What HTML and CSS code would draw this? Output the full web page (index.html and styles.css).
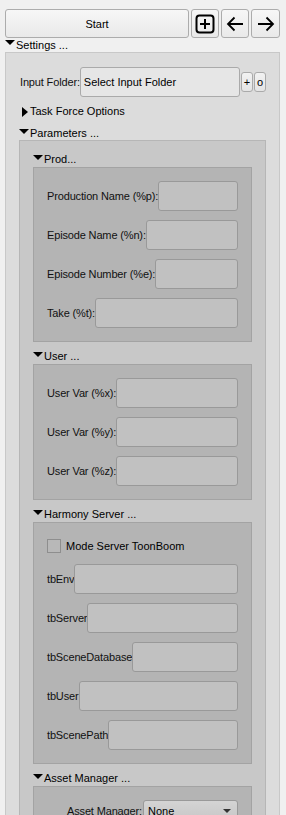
FILE: index.html
```html
<!DOCTYPE html>
<html>
<head>
<meta charset="utf-8">
<link rel="stylesheet" href="styles.css">
</head>
<body>
<div class="toolbar">
  <button class="btn btn-start">Start</button>
  <button class="btn btn-icon"><svg width="20" height="20" viewBox="0 0 20 20"><rect x="1.5" y="1.5" width="17" height="17" rx="3" fill="none" stroke="#000" stroke-width="2"/><path d="M10 5v10M5 10h10" stroke="#000" stroke-width="2"/></svg></button>
  <button class="btn btn-icon"><svg width="18" height="16" viewBox="0 0 18 16"><path d="M17 8H2M8.5 1.5L2 8l6.5 6.5" fill="none" stroke="#000" stroke-width="1.8"/></svg></button>
  <button class="btn btn-icon btn-last"><svg width="18" height="16" viewBox="0 0 18 16"><path d="M1 8h15M9.5 1.5L16 8l-6.5 6.5" fill="none" stroke="#000" stroke-width="1.8"/></svg></button>
</div>

<div class="hdr hdr-top"><span class="tri-down"></span><span>Settings ...</span></div>
<div class="panel panel-settings">
  <div class="folder-row">
    <span class="label">Input Folder:</span>
    <div class="field field-light">Select Input Folder</div>
    <button class="mini">+</button>
    <button class="mini">o</button>
  </div>
  <div class="hdr hdr-task"><span class="tri-right"></span><span>Task Force Options</span></div>
  <div class="hdr hdr-params"><span class="tri-down"></span><span>Parameters ...</span></div>
  <div class="panel panel-params">
    <div class="hdr hdr-group first"><span class="tri-down"></span><span>Prod...</span></div>
    <div class="panel panel-group">
      <div class="row"><span class="label">Production Name (%p):</span><div class="field"></div></div>
      <div class="row"><span class="label">Episode Name (%n):</span><div class="field"></div></div>
      <div class="row"><span class="label">Episode Number (%e):</span><div class="field"></div></div>
      <div class="row"><span class="label">Take (%t):</span><div class="field"></div></div>
    </div>

    <div class="hdr hdr-group"><span class="tri-down"></span><span>User ...</span></div>
    <div class="panel panel-group">
      <div class="row"><span class="label">User Var (%x):</span><div class="field"></div></div>
      <div class="row"><span class="label">User Var (%y):</span><div class="field"></div></div>
      <div class="row"><span class="label">User Var (%z):</span><div class="field"></div></div>
    </div>

    <div class="hdr hdr-group"><span class="tri-down"></span><span>Harmony Server ...</span></div>
    <div class="panel panel-group">
      <div class="check-row"><span class="checkbox"></span><span>Mode Server ToonBoom</span></div>
      <div class="row"><span class="label">tbEnv</span><div class="field"></div></div>
      <div class="row"><span class="label">tbServer</span><div class="field"></div></div>
      <div class="row"><span class="label">tbSceneDatabase</span><div class="field"></div></div>
      <div class="row"><span class="label">tbUser</span><div class="field"></div></div>
      <div class="row"><span class="label">tbScenePath</span><div class="field"></div></div>
    </div>

    <div class="hdr hdr-group"><span class="tri-down"></span><span>Asset Manager ...</span></div>
    <div class="panel panel-group">
      <div class="combo-row"><span class="label">Asset Manager:</span><div class="combo"><span>None</span><span class="combo-arrow"></span></div></div>
    </div>
  </div>
</div>
</body>
</html>
```

FILE: styles.css
```css
html, body {
  margin: 0;
  padding: 0;
  background: #f0f0f0;
  height: 815px;
  overflow: hidden;
}
body {
  font-family: "Liberation Sans", Arial, sans-serif;
  font-size: 11px;
  color: #000;
  width: 286px;
}
.toolbar {
  display: flex;
  gap: 2px;
  padding: 9px 0 0 5px;
  width: 275px;
}
.btn {
  height: 29px;
  border: 1px solid #acacac;
  border-radius: 3px;
  background: linear-gradient(#f7f7f7, #e9e9e9);
  font-family: inherit;
  font-size: 11px;
  color: #000;
  padding: 0;
  display: flex;
  align-items: center;
  justify-content: center;
}
.btn-start { flex: 1; }
.btn-icon { width: 28px; flex: none; }
.btn-last { width: 29px; }

.hdr {
  display: flex;
  align-items: flex-start;
  line-height: 13px;
  height: 13px;
  white-space: nowrap;
}
.hdr-top { margin: 1px 0 0 5px; }
.hdr-task { margin: 8px 0 0 3px; }
.hdr-params { margin-top: 9px; }
.hdr-group { margin-top: 8px; padding-bottom: 1px; }
.hdr-group.first { margin-top: 0; }

.tri-down {
  width: 0;
  height: 0;
  border-left: 5px solid transparent;
  border-right: 5px solid transparent;
  border-top: 5px solid #000;
  margin-top: 2px;
  margin-right: 1px;
}
.hdr-top .tri-down { margin-top: 1px; }
.tri-right {
  width: 0;
  height: 0;
  border-top: 5px solid transparent;
  border-bottom: 5px solid transparent;
  border-left: 6px solid #000;
  margin-top: 2px;
  margin-right: 2px;
}

.panel {
  border: 1px solid rgba(0,0,0,0.09);
  box-sizing: border-box;
}
.panel-settings {
  margin-left: 5px;
  width: 275px;
  background: #dcdcdc;
  padding: 14px 13px 40px 13px;
}
.panel-params {
  background: #c8c8c8;
  padding: 12px 13px 40px 13px;
}
.panel-group {
  background: #b4b4b4;
  border-color: #a3a3a3;
  padding: 13px 13px 13px 12px;
  display: flex;
  flex-direction: column;
  gap: 9px;
}

.folder-row {
  display: flex;
  align-items: center;
  height: 30px;
}
.folder-row .label { margin-right: 0; letter-spacing: -0.15px; }
.field {
  flex: 1;
  height: 30px;
  box-sizing: border-box;
  border: 1px solid #999999;
  border-radius: 3px;
  background: #c1c1c1;
}
.field-light {
  background: #e6e6e6;
  border-color: #aaaaaa;
  display: flex;
  align-items: center;
  padding-left: 3px;
  color: #000;
}
.mini {
  width: 12px;
  height: 20px;
  box-sizing: border-box;
  border: 1px solid #aaaaaa;
  border-radius: 3px;
  background: linear-gradient(#f2f2f2, #e4e4e4);
  padding: 0;
  font-family: inherit;
  font-size: 11px;
  color: #000;
  margin-left: 1px;
  display: flex;
  align-items: center;
  justify-content: center;
}

.row {
  display: flex;
  align-items: center;
  height: 30px;
}
.label {
  white-space: nowrap;
  color: #111;
  padding-left: 1px;
}
.row .label { margin-right: 0; letter-spacing: -0.15px; }

.check-row {
  display: flex;
  align-items: center;
  height: 19px;
  padding-left: 1px;
}
.checkbox {
  width: 14px;
  height: 14px;
  box-sizing: border-box;
  border: 1px solid #8e8e8e;
  background: #b8b8b8;
  margin-right: 5px;
}

.combo-row {
  display: flex;
  align-items: center;
  height: 22px;
  padding-left: 20px;
}
.combo-row .label { margin-right: 1px; letter-spacing: -0.15px; }
.combo {
  flex: 1;
  height: 22px;
  box-sizing: border-box;
  border: 1px solid #999;
  border-radius: 3px;
  background: linear-gradient(#d4d4d4, #c6c6c6);
  display: flex;
  align-items: center;
  justify-content: space-between;
  padding: 0 6px 0 4px;
}
.combo-arrow {
  width: 0;
  height: 0;
  border-left: 4px solid transparent;
  border-right: 4px solid transparent;
  border-top: 4px solid #333;
}
```
